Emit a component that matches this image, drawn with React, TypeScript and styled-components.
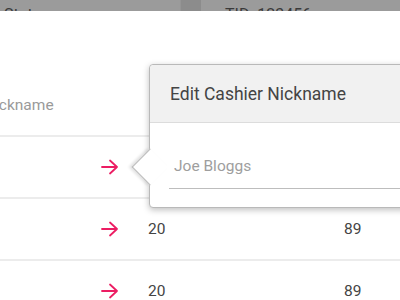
import styled, { createGlobalStyle } from "styled-components";

const GlobalStyle = createGlobalStyle`
  html, body {
    margin: 0;
    padding: 0;
    background: #ffffff;
    font-family: "Roboto", "Liberation Sans", sans-serif;
  }
`;

const rows = [
  { qty: "20", total: "89" },
  { qty: "20", total: "89" },
  { qty: "20", total: "89" },
];

const App = () => {
  return (
    <Screen>
      <GlobalStyle />
      <TopBar>
        <TopCell>Status</TopCell>
        <TopDivider />
        <TopCell>TID: 123456</TopCell>
      </TopBar>
      <Sheet>
        <HeaderRow>
          <HeadLabel>Nickname</HeadLabel>
        </HeaderRow>
        {rows.map((r, i) => (
          <Row key={i}>
            <Cell />
            <ArrowCell>
              <ArrowIcon />
            </ArrowCell>
            <Value>{r.qty}</Value>
            <Value>{r.total}</Value>
          </Row>
        ))}
      </Sheet>
      <Popover>
        <Pointer />
        <PopHeader>
          <PopTitle>Edit Cashier Nickname</PopTitle>
        </PopHeader>
        <PopBody>
          <NameInput defaultValue="" placeholder="Joe Bloggs" />
        </PopBody>
      </Popover>
    </Screen>
  );
};

export default App;

const ArrowIcon = () => (
  <svg width="18" height="16" viewBox="0 0 18 16" fill="none">
    <path d="M1 8h15M9 1.5l7 6.5-7 6.5" stroke="#ec1d63" strokeWidth="1.8" strokeLinecap="round" strokeLinejoin="round" />
  </svg>
);

const Screen = styled.div`
  position: relative;
  width: 400px;
  height: 300px;
  overflow: hidden;
  background: #ffffff;
`;

const TopBar = styled.div`
  display: flex;
  height: 11px;
  overflow: hidden;
  background: #9b9b9b;
`;

const TopCell = styled.div`
  font-size: 16px;
  color: #3a3a3a;
  padding: 6px 0 0 4px;
  line-height: 18px;
  &:first-child {
    width: 176px;
  }
`;

const TopDivider = styled.div`
  width: 20px;
  margin-right: 20px;
  background: #8c8c8c;
  border-left: 1px solid #959595;
`;

const Sheet = styled.div`
  margin-left: -16px;
`;

const HeaderRow = styled.div`
  height: 126px;
  display: flex;
  align-items: flex-end;
  padding-bottom: 21px;
  box-sizing: border-box;
  border-bottom: 2px solid #ececec;
`;

const HeadLabel = styled.div`
  font-size: 15.5px;
  color: #9a9a9a;
`;

const Row = styled.div`
  display: grid;
  grid-template-columns: 117px 20px 223px 60px;
  align-items: center;
  height: 60px;
  border-bottom: 2px solid #ececec;
`;

const Cell = styled.div``;

const ArrowCell = styled.div`
  display: flex;
  align-items: center;
`;

const Value = styled.div`
  font-size: 15.5px;
  color: #444444;
  padding-left: 27px;
  &:last-child {
    padding-left: 0;
  }
`;

const Popover = styled.div`
  position: absolute;
  left: 149px;
  top: 64px;
  width: 290px;
  height: 144px;
  box-sizing: border-box;
  background: #ffffff;
  border: 1px solid #b9b9b9;
  border-radius: 4px;
  box-shadow: 0 2px 6px rgba(0, 0, 0, 0.25);
`;

const Pointer = styled.div`
  position: absolute;
  left: -13px;
  top: 89px;
  width: 25px;
  height: 25px;
  background: #ffffff;
  border-left: 1px solid #b9b9b9;
  border-bottom: 1px solid #b9b9b9;
  transform: rotate(45deg);
  box-shadow: -2px 2px 3px rgba(0, 0, 0, 0.12);
`;

const PopHeader = styled.div`
  position: relative;
  height: 57px;
  display: flex;
  align-items: center;
  padding-left: 20px;
  background: #f1f1f1;
  border-bottom: 1px solid #dcdcdc;
  border-radius: 4px 4px 0 0;
`;

const PopTitle = styled.div`
  font-size: 17.5px;
  color: #444444;
`;

const PopBody = styled.div`
  position: relative;
  padding: 34px 0 0 19px;
`;

const NameInput = styled.input`
  display: block;
  width: 100%;
  box-sizing: border-box;
  border: none;
  border-bottom: 1px solid #bdbdbd;
  outline: none;
  padding: 0 0 13px 5px;
  font-family: "Roboto", "Liberation Sans", sans-serif;
  font-size: 15.5px;
  color: #444444;
  background: transparent;
  &::placeholder {
    color: #9e9e9e;
  }
`;
